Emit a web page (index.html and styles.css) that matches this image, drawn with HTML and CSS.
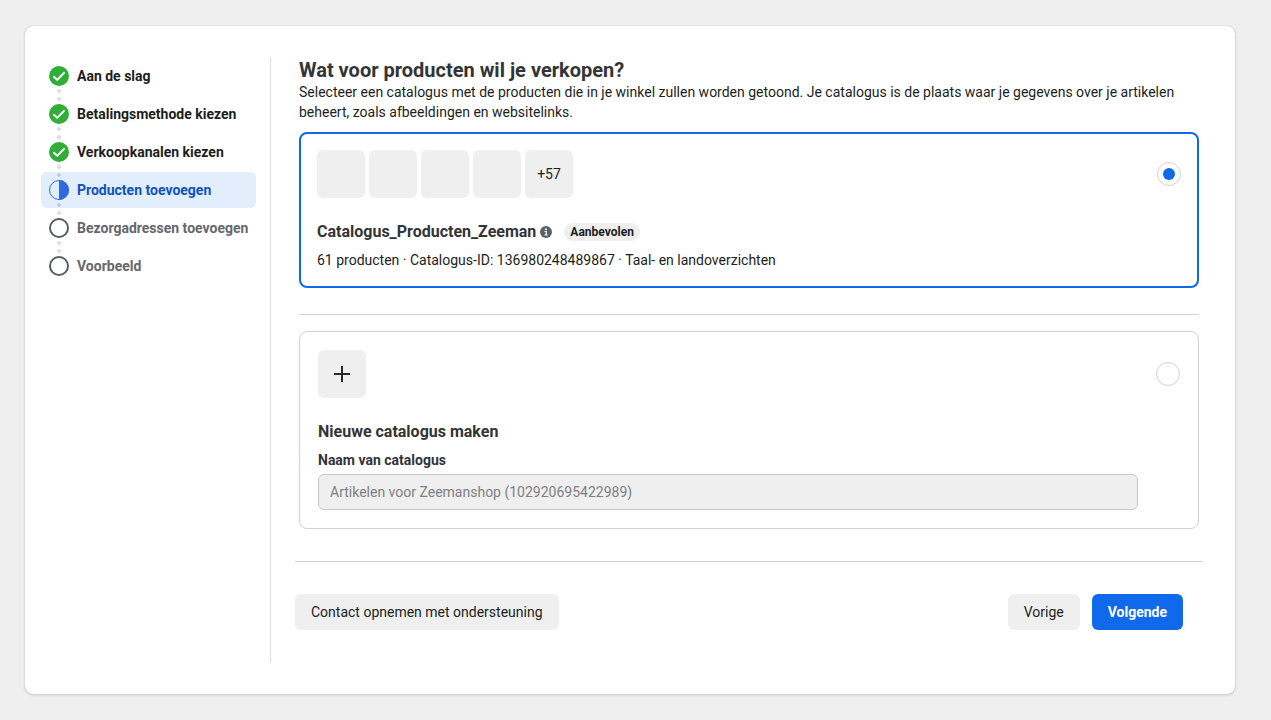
FILE: index.html
```html
<!DOCTYPE html>
<html lang="nl">
<head>
<meta charset="utf-8">
<meta name="viewport" content="width=device-width, initial-scale=1">
<title>Producten toevoegen</title>
<link rel="stylesheet" href="styles.css">
</head>
<body>
<div class="panel">
  <nav class="sidebar" aria-label="Stappen">
    <ol class="steps">
      <li class="step">
        <svg class="step-icon" viewBox="0 0 20 20" aria-hidden="true"><circle cx="10" cy="10" r="10" fill="#31ae38"/><path d="M5 10.7l3.2 3.2 6.8-7" fill="none" stroke="#fff" stroke-width="2" stroke-linecap="round" stroke-linejoin="round"/></svg>
        <span>Aan de slag</span>
      </li>
      <li class="step">
        <svg class="step-icon" viewBox="0 0 20 20" aria-hidden="true"><circle cx="10" cy="10" r="10" fill="#31ae38"/><path d="M5 10.7l3.2 3.2 6.8-7" fill="none" stroke="#fff" stroke-width="2" stroke-linecap="round" stroke-linejoin="round"/></svg>
        <span>Betalingsmethode kiezen</span>
      </li>
      <li class="step">
        <svg class="step-icon" viewBox="0 0 20 20" aria-hidden="true"><circle cx="10" cy="10" r="10" fill="#31ae38"/><path d="M5 10.7l3.2 3.2 6.8-7" fill="none" stroke="#fff" stroke-width="2" stroke-linecap="round" stroke-linejoin="round"/></svg>
        <span>Verkoopkanalen kiezen</span>
      </li>
      <li class="step step-current" aria-current="step">
        <svg class="step-icon" viewBox="0 0 20 20" aria-hidden="true"><circle cx="10" cy="10" r="9.5" fill="none" stroke="#2d6ae0"/><path d="M10 0a10 10 0 0 1 0 20z" fill="#2d6ae0"/></svg>
        <span>Producten toevoegen</span>
      </li>
      <li class="step step-todo">
        <svg class="step-icon" viewBox="0 0 20 20" aria-hidden="true"><circle cx="10" cy="10" r="9" fill="none" stroke="#575d67" stroke-width="2"/></svg>
        <span>Bezorgadressen toevoegen</span>
      </li>
      <li class="step step-todo">
        <svg class="step-icon" viewBox="0 0 20 20" aria-hidden="true"><circle cx="10" cy="10" r="9" fill="none" stroke="#575d67" stroke-width="2"/></svg>
        <span>Voorbeeld</span>
      </li>
    </ol>
  </nav>
  <main class="main">
    <div class="content">
      <h1 class="title">Wat voor producten wil je verkopen?</h1>
      <p class="intro">Selecteer een catalogus met de producten die in je winkel zullen worden getoond. Je catalogus is de plaats waar je gegevens over je artikelen beheert, zoals afbeeldingen en websitelinks.</p>
      <section class="card card-selected">
        <div class="card-top">
          <div class="tiles">
            <div class="tile"></div>
            <div class="tile"></div>
            <div class="tile"></div>
            <div class="tile"></div>
            <div class="tile">+57</div>
          </div>
          <input class="radio" type="radio" name="catalog" aria-labelledby="existing" checked>
        </div>
        <div class="card-heading">
          <h2 class="card-title" id="existing">Catalogus_Producten_Zeeman</h2>
          <svg class="info" viewBox="0 0 12 12" aria-hidden="true"><circle cx="6" cy="6" r="6" fill="#5a606a"/><circle cx="6" cy="3.3" r="1" fill="#fff"/><path d="M4.5 5.5H6.2V8.7M4.5 9H7.7" fill="none" stroke="#fff" stroke-width="1.2"/></svg>
          <span class="badge">Aanbevolen</span>
        </div>
        <p class="meta">61 producten · Catalogus-ID: 136980248489867 · Taal- en landoverzichten</p>
      </section>
      <hr class="rule">
      <section class="card">
        <div class="card-top">
          <div class="tile">
            <svg class="plus" viewBox="0 0 16 16" aria-hidden="true"><path d="M8 0v16M0 8h16" stroke="#28292b" stroke-width="2"/></svg>
          </div>
          <input class="radio" type="radio" name="catalog" aria-labelledby="new">
        </div>
        <div class="card-heading">
          <h2 class="card-title" id="new">Nieuwe catalogus maken</h2>
        </div>
        <label class="label" for="name">Naam van catalogus</label>
        <div class="field-row">
          <input class="field" id="name" type="text" value="Artikelen voor Zeemanshop (102920695422989)" disabled>
        </div>
      </section>
    </div>
    <footer class="footer">
      <button class="button" type="button">Contact opnemen met ondersteuning</button>
      <div class="actions">
        <button class="button" type="button">Vorige</button>
        <button class="button button-primary" type="button">Volgende</button>
      </div>
    </footer>
  </main>
</div>
</body>
</html>
```
FILE: styles.css
```css
* {
  box-sizing: border-box;
}

body {
  margin: 0;
  min-height: 100vh;
  padding: 26px 36px 26px 25px;
  display: flex;
  background: #efefef;
  color: #1c1e21;
  font-family: Roboto, "Liberation Sans", sans-serif;
  font-size: 14px;
  line-height: 20px;
}

h1,
h2,
p,
ol {
  margin: 0;
  padding: 0;
}

.panel {
  flex: 1;
  min-width: 0;
  display: flex;
  padding: 32px 32px 32px 16px;
  background: #fff;
  border-radius: 8px;
  box-shadow: 0 0 1px rgba(0, 0, 0, 0.3), 0 1px 3px rgba(0, 0, 0, 0.15);
}

.sidebar {
  flex: none;
  width: 230px;
  padding-right: 14px;
  border-right: 1px solid #dcdcdc;
}

.steps {
  display: grid;
  gap: 2px;
  list-style: none;
}

.step {
  position: relative;
  display: flex;
  align-items: center;
  gap: 8px;
  height: 36px;
  padding: 0 8px;
  border-radius: 6px;
  font-weight: 700;
  white-space: nowrap;
}

.step-icon {
  flex: none;
  width: 20px;
  height: 20px;
}

/* Two dots linking a step to the next one */
.step:not(:last-child)::after {
  content: "";
  position: absolute;
  z-index: 1;
  top: 29px;
  left: 16px;
  width: 4px;
  height: 16px;
  background: radial-gradient(circle, rgba(0, 0, 0, 0.13) 2px, transparent 2px) 0 0 / 4px 8px;
}

.step-current {
  background: #e2eefc;
  color: #0f52bd;
}

.step-todo {
  color: #65676b;
}

.main {
  flex: 1;
  min-width: 0;
  padding-left: 24px;
}

.content {
  padding: 0 4px;
}

.title {
  color: #333436;
  font-size: 20px;
  line-height: 24px;
}

.intro {
  margin-bottom: 10px;
}

.card {
  padding: 18px;
  border: 1px solid #d2d2d2;
  border-radius: 8px;
}

.card-selected {
  padding: 16px;
  border: 2px solid #1068ea;
}

.card-top {
  display: flex;
  align-items: center;
  justify-content: space-between;
}

.tiles {
  display: flex;
  gap: 4px;
}

.tile {
  display: flex;
  align-items: center;
  justify-content: center;
  width: 48px;
  height: 48px;
  border-radius: 6px;
  background: #efefef;
}

.plus {
  width: 16px;
  height: 16px;
}

.radio {
  appearance: none;
  flex: none;
  width: 24px;
  height: 24px;
  margin: 0;
  border: 1px solid #d2d2d2;
  border-radius: 50%;
  background: #fff;
}

.radio:checked {
  padding: 5px;
  background: #1068ea content-box;
}

.card-heading {
  display: flex;
  align-items: center;
  margin: 24px 0 8px;
}

.card-title {
  color: #333436;
  font-size: 16px;
  line-height: 20px;
}

.info {
  width: 12px;
  height: 12px;
  margin: 0 12px 0 4px;
}

.badge {
  padding: 1px 6px;
  border-radius: 9px;
  background: #efefef;
  font-size: 12px;
  font-weight: 700;
  line-height: 16px;
}

.rule {
  height: 1px;
  margin: 26px 0 16px;
  border: 0;
  background: #d2d2d2;
}

.label {
  display: block;
  margin-bottom: 4px;
  color: #333436;
  font-weight: 700;
}

.field-row {
  display: flex;
  padding-right: 42px;
}

.field {
  flex: 1;
  min-width: 0;
  height: 36px;
  padding: 0 11px;
  border: 1px solid #c6c6c6;
  border-radius: 6px;
  background: #efefef;
  color: #808080;
  font: inherit;
}

.footer {
  display: flex;
  align-items: center;
  justify-content: space-between;
  margin-top: 32px;
  padding: 32px 20px 0 0;
  border-top: 1px solid #d2d2d2;
}

.actions {
  display: flex;
  gap: 12px;
}

.button {
  height: 36px;
  padding: 0 16px;
  border: 0;
  border-radius: 6px;
  background: #efefef;
  color: #1c1e21;
  font: inherit;
}

.button-primary {
  background: #1068ea;
  color: #fff;
  font-weight: 700;
}
```
